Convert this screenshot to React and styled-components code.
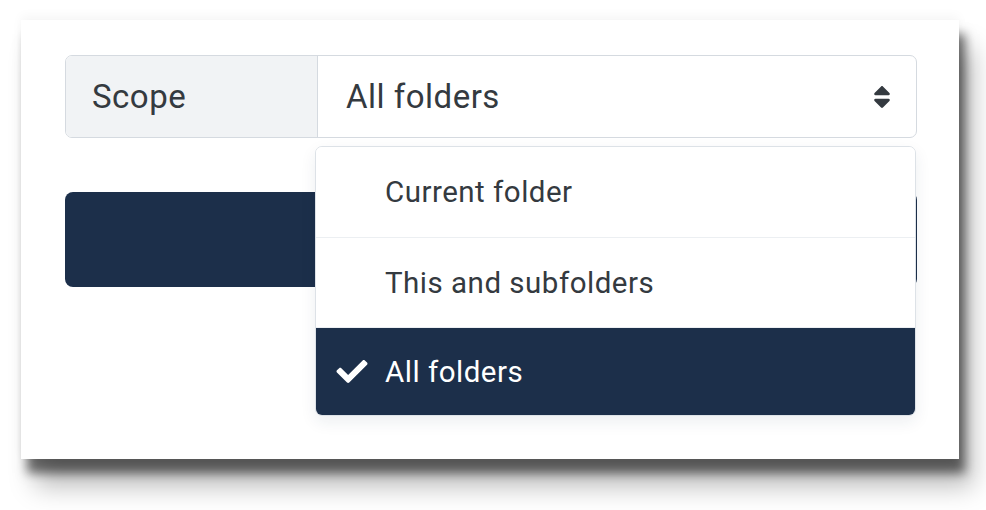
import React from 'react'
import styled, { createGlobalStyle } from 'styled-components'
import { FaCheck, FaSort } from 'react-icons/fa'

const GlobalStyle = createGlobalStyle`
   html, body {
      margin: 0;
      background: #ffffff;
   }
   body {
      font-family: Roboto, 'Liberation Sans', sans-serif;
      color: #343a40;
   }
`

const Page = styled.div`
   width: 986px;
   height: 510px;
   padding: 20px 0 0 21px;
   box-sizing: border-box;
   overflow: hidden;
`

const Card = styled.section`
   position: relative;
   width: 938px;
   height: 439px;
   box-sizing: border-box;
   padding: 35px 42px 0 44px;
   background: #ffffff;
   box-shadow: 0 -4px 10px rgba(0, 0, 0, 0.04), 6px 14px 10px rgba(0, 0, 0, 0.55),
      14px 28px 24px rgba(0, 0, 0, 0.25);
`

const InputGroup = styled.div`
   position: relative;
   display: flex;
   height: 83px;
   border: 1px solid #d5dae0;
   border-radius: 7px;
   box-sizing: border-box;
`

const Addon = styled.div`
   display: flex;
   align-items: center;
   width: 252px;
   padding-left: 26px;
   box-sizing: border-box;
   background: #f1f3f5;
   border-right: 1px solid #d5dae0;
   border-radius: 6px 0 0 6px;
   font-size: 33px;
   letter-spacing: 0.5px;
`

const Select = styled.div`
   flex: 1;
   display: flex;
   align-items: center;
   justify-content: space-between;
   padding: 0 24px 0 28px;
   font-size: 33px;
   letter-spacing: 0.5px;
   svg {
      width: 20px;
      height: 28px;
      color: #343a40;
   }
`

const Menu = styled.ul`
   position: absolute;
   top: 90px;
   left: 249px;
   width: 599px;
   margin: 0;
   padding: 0;
   list-style: none;
   background: #ffffff;
   border: 1px solid #dde2e7;
   border-radius: 7px;
   overflow: hidden;
   box-shadow: 0 6px 16px rgba(30, 50, 80, 0.08);
   z-index: 2;
`

const Option = styled.li`
   display: flex;
   align-items: center;
   height: ${p => (p.$last ? '88px' : '90px')};
   padding-left: 69px;
   position: relative;
   font-size: 29.5px;
   letter-spacing: 0.5px;
   color: ${p => (p.$active ? '#ffffff' : '#343a40')};
   background: ${p => (p.$active ? '#1c2f4a' : '#ffffff')};
   border-top: ${p => (p.$first ? 'none' : '1px solid #eceff2')};
   box-sizing: border-box;
   svg {
      position: absolute;
      left: 17px;
      width: 38px;
      height: 31px;
   }
`

const Submit = styled.button`
   display: block;
   width: 100%;
   height: 95px;
   margin-top: 54px;
   border: none;
   border-radius: 8px;
   background: #1c2f4a;
`

const options = ['Current folder', 'This and subfolders', 'All folders']

const App = () => {
   const selected = 'All folders'
   return (
      <>
         <GlobalStyle />
         <Page>
            <Card>
               <InputGroup>
                  <Addon>Scope</Addon>
                  <Select>
                     <span>{selected}</span>
                     <FaSort />
                  </Select>
                  <Menu>
                     {options.map((o, i) => (
                        <Option
                           key={o}
                           $first={i === 0}
                           $last={i === options.length - 1}
                           $active={o === selected}
                        >
                           {o === selected && <FaCheck />}
                           {o}
                        </Option>
                     ))}
                  </Menu>
               </InputGroup>
               <Submit type='button' />
            </Card>
         </Page>
      </>
   )
}

export default App
